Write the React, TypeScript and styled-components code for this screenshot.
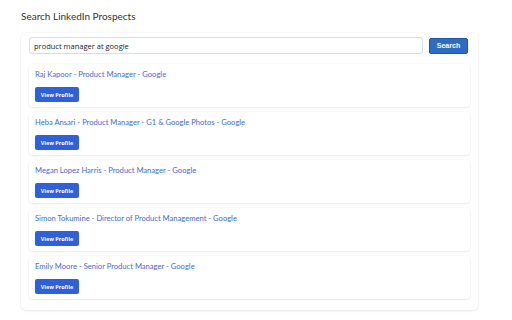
import styled, { createGlobalStyle } from 'styled-components'

const GlobalStyle = createGlobalStyle`
  html, body {
    margin: 0;
    padding: 0;
    background: #ffffff;
  }
  body {
    font-family: Lato, "Open Sans", "Liberation Sans", sans-serif;
  }
`

const prospects = [
  'Raj Kapoor - Product Manager - Google',
  'Heba Ansari - Product Manager - G1 & Google Photos - Google',
  'Megan Lopez Harris - Product Manager - Google',
  'Simon Tokumine - Director of Product Management - Google',
  'Emily Moore - Senior Product Manager - Google',
]

export default function App() {
  return (
    <>
      <GlobalStyle />
      <Page>
        <Title>Search LinkedIn Prospects</Title>
        <Panel>
          <SearchRow>
            <SearchInput defaultValue="product manager at google" />
            <SearchButton>Search</SearchButton>
          </SearchRow>
          <Results>
            {prospects.map((p) => (
              <Card key={p}>
                <ProspectName href="#">{p}</ProspectName>
                <ProfileButton>View Profile</ProfileButton>
              </Card>
            ))}
          </Results>
        </Panel>
      </Page>
    </>
  )
}

const Page = styled.div`
  width: 512px;
  height: 320px;
  padding: 9px 34px 0 21px;
  box-sizing: border-box;
`

const Title = styled.h1`
  margin: 0 0 10px;
  font-size: 10px;
  line-height: 14px;
  font-weight: 400;
  color: #333333;
`

const Panel = styled.div`
  width: 457px;
  height: 277px;
  box-sizing: border-box;
  padding: 4px 8px 13px;
  background: #ffffff;
  border-radius: 5px;
  box-shadow: 0 1px 3px rgba(0, 0, 0, 0.08), 0 0 0 1px rgba(0, 0, 0, 0.02);
`

const SearchRow = styled.div`
  display: flex;
  align-items: center;
  gap: 6px;
  padding-right: 2px;
`

const SearchInput = styled.input`
  flex: 1;
  height: 17px;
  box-sizing: border-box;
  border: 1px solid #dcdcdc;
  border-radius: 3px;
  padding: 0 4px;
  font-family: "Open Sans", "Liberation Sans", sans-serif;
  font-size: 7.5px;
  color: #222222;
  outline: none;
`

const SearchButton = styled.button`
  width: 39px;
  height: 16px;
  padding: 0;
  border: 1px solid #1f55a8;
  border-radius: 2px;
  background: #2b6cc4;
  color: #ffffff;
  font-family: "Liberation Sans", sans-serif;
  font-size: 7px;
  font-weight: 700;
`

const Results = styled.div`
  display: flex;
  flex-direction: column;
  gap: 5px;
  margin-top: 10px;
`

const Card = styled.div`
  height: 43px;
  box-sizing: border-box;
  padding: 5px 6px;
  display: flex;
  flex-direction: column;
  align-items: flex-start;
  gap: 7px;
  border-radius: 4px;
  background: #ffffff;
  box-shadow: 0 1px 2px rgba(0, 0, 0, 0.07), 0 0 0 1px rgba(0, 0, 0, 0.02);
`

const ProspectName = styled.a`
  font-size: 7.6px;
  line-height: 11px;
  color: #3d6be0;
  text-decoration: none;
`

const ProfileButton = styled.button`
  width: 44px;
  height: 15px;
  padding: 0;
  border: none;
  border-radius: 2px;
  background: #2d60e0;
  color: #ffffff;
  font-family: "Open Sans", "Liberation Sans", sans-serif;
  font-size: 5.5px;
  font-weight: 700;
`
